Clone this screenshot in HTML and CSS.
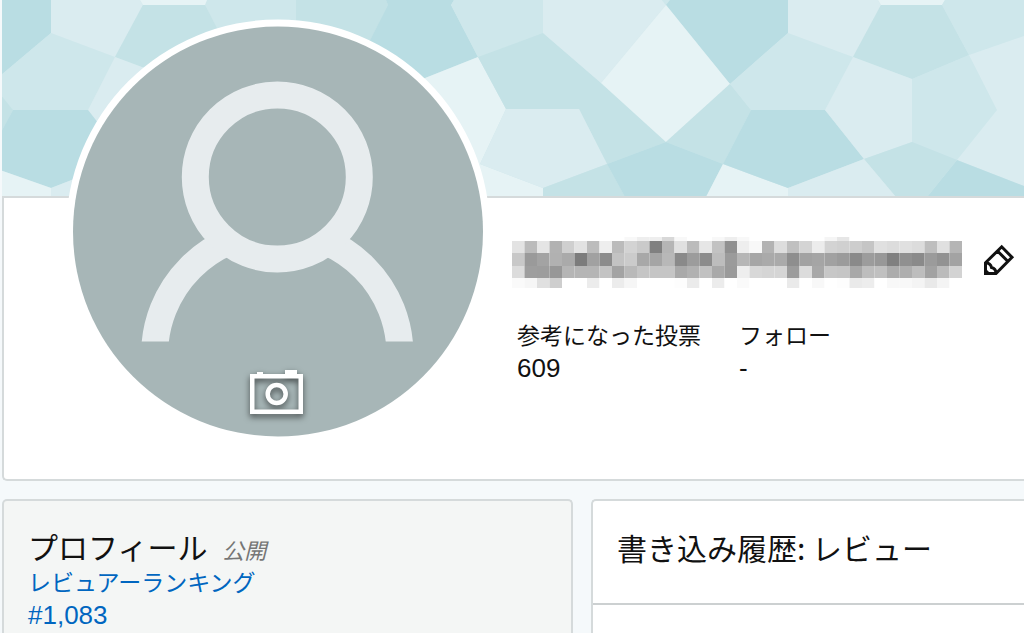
FILE: index.html
```html
<!DOCTYPE html>
<html lang="ja">
<head>
<meta charset="utf-8">
<title>プロフィール</title>
<link rel="stylesheet" href="styles.css">
</head>
<body>
<div class="page">
  <div class="banner">
    <svg class="banner-art" viewBox="2 0 1022 197" preserveAspectRatio="xMinYMin slice" aria-hidden="true">
      <rect class="t3" x="2" width="1022" height="197"/>
      <g class="tiles">
        <path class="t1" d="M0 0H51V33L0 76z"/>
        <path class="t3" d="M0 76L51 33L115 57L88 110H13L0 94z"/>
        <path class="t2" d="M0 94L13 110L0 134z"/>
        <path class="t4" d="M51 0H140L143 5L115 57L51 33z"/>
        <path class="t5" d="M140 0H207L205 5H143z"/>
        <path class="t2" d="M143 5H205L231 55L174 79L115 57z"/>
        <path class="t4" d="M115 57L174 79V142L126 159L88 110z"/>
        <path class="t1" d="M13 110H88L126 159L51 188L0 170V134z"/>
        <path class="t5" d="M0 170L51 188V197H0z"/>
        <path class="t4" d="M51 188L126 159L158 197H51z"/>
        <path class="t2" d="M296 0H386L388 5L360 62L296 60z"/>
        <path class="t1" d="M386 0H454L451 5L478 57L425 78L340 100L388 5z"/>
        <path class="t3" d="M454 0H543V33L478 57L451 5z"/>
        <path class="t5" d="M478 57L506 109L480 164L543 188V197H440L400 88z"/>
        <path class="t2" d="M543 33L478 57L506 109H579L607 164L666 142L601 83z"/>
        <path class="t4" d="M543 0V33L601 83L666 5L662 0z"/>
        <path class="t4" d="M506 109L480 164L543 188L607 164L579 109z"/>
        <path class="t2" d="M543 188L607 164L625 197H543z"/>
        <path class="t3" d="M662 0H670L666 5z"/>
        <path class="t1" d="M670 0L666 5L730 84L788 33V0z"/>
        <path class="t5" d="M666 5L601 83L666 142L730 84z"/>
        <path class="t2" d="M730 84L666 142L723 164L751 110z"/>
        <path class="t1" d="M666 142L607 164L625 197H706L723 164z"/>
        <path class="t5" d="M723 164L706 197H788V188z"/>
        <path class="t1" d="M751 110L723 164L788 188L864 159L825 110z"/>
        <path class="t3" d="M788 33L730 84L751 110H825L853 57z"/>
        <path class="t4" d="M788 0V33L853 57L881 5L878 0z"/>
        <path class="t5" d="M878 0L881 5H942L945 0z"/>
        <path class="t2" d="M881 5L853 57L912 79L969 55L942 5z"/>
        <path class="t3" d="M945 0L942 5L969 55L1024 36V0z"/>
        <path class="t4" d="M853 57L825 110L864 159L912 142V79z"/>
        <path class="t3" d="M912 79V142L957 160L997 110L969 55z"/>
        <path class="t4" d="M969 55L997 110L957 160L1024 186V36z"/>
        <path class="t1" d="M957 160L1024 186V197H927z"/>
        <path class="t2" d="M912 142L864 159L896 197H927L957 160z"/>
        <path class="t4" d="M864 159L788 188V197H896z"/>
      </g>
    </svg>
  </div>

  <header class="hero">
    <div class="avatar">
      <svg class="avatar-art" viewBox="66 19 424 424" role="img" aria-label="プロフィール画像">
        <clipPath id="bust"><rect x="66" y="19" width="424" height="322.500"/></clipPath>
        <circle class="ring" cx="278" cy="231.500" r="212"/>
        <circle class="disc" cx="278" cy="231.500" r="205"/>
        <g class="person" clip-path="url(#bust)">
          <path d="M154.600 354.400A122.700 122.700 0 0 1 400 354.400"/>
          <circle class="disc" cx="277.300" cy="177" r="82"/>
        </g>
      </svg>
      <button class="camera" type="button" aria-label="画像を変更">
        <svg viewBox="0 0 56 48" aria-hidden="true">
          <path d="M1 5H8V3H14V5H36V1H48V5H54V45H1zM5.500 9.500V40.500H49.500V9.500z" fill-rule="evenodd"/>
          <circle cx="27.700" cy="25" r="9"/>
        </svg>
      </button>
    </div>
    <div class="info">
      <div class="name-row">
        <svg class="name-mask" id="name" viewBox="0 0 450 52" role="img" aria-label="名前"></svg>
        <button class="edit" type="button" aria-label="編集">
          <svg viewBox="982 246 34 34" aria-hidden="true">
            <path d="M985.500 273.500V262.800L1001.700 246.800L1012 257.300L996 273.500zM997.500 251L1008 261.500M985.500 262.800C989 263 991 265 991.500 267.500C994 268 996 270 996 273.500"/>
            <path class="lead" d="M985 268L991 274H985z"/>
          </svg>
        </button>
      </div>
      <dl class="stats">
        <div><dt>参考になった投票</dt><dd>609</dd></div>
        <div><dt>フォロー</dt><dd>-</dd></div>
      </dl>
    </div>
  </header>

  <main class="columns">
    <section class="card profile">
      <h2>プロフィール <em>公開</em></h2>
      <a href="#ranking">レビュアーランキング<span class="rank">#1,083</span></a>
    </section>
    <section class="card history">
      <h2>書き込み履歴: レビュー</h2>
    </section>
  </main>
</div>
<script src="script.js"></script>
</body>
</html>
```
FILE: styles.css
```css
* {
  box-sizing: border-box;
}

body {
  margin: 0;
  background: #f5f9fb;
  color: #111;
  font-family: "Noto Sans CJK JP", sans-serif;
  font-size: 23px;
  line-height: 34px;
}

.page {
  display: flex;
  flex-direction: column;
  min-height: 100vh;
  padding-left: 2px;
}

.banner {
  height: 196px;
  overflow: hidden;
}

.banner-art {
  display: block;
  width: 100%;
  min-height: 197px;
}

.t1 { fill: #b9dde3; }
.t2 { fill: #c4e2e6; }
.t3 { fill: #cee7eb; }
.t4 { fill: #daecf0; }
.t5 { fill: #e6f3f5; }

.hero {
  display: flex;
  gap: 22px;
  padding: 0 8px 36px 62px;
  background: #fff;
  border: 2px solid #d5dadb;
  border-right: 0;
  border-radius: 0 0 0 5px;
}

.avatar {
  position: relative;
  flex: none;
  width: 424px;
  height: 424px;
  margin-top: -179px;
}

.avatar-art {
  display: block;
}

.ring { fill: #fff; }
.disc { fill: #a7b6b7; }

.person {
  stroke: #e7ecee;
  stroke-width: 27;
}

.person path {
  fill: none;
}

button {
  padding: 0;
  border: 0;
  background: none;
  cursor: pointer;
}

button svg {
  display: block;
}

.camera {
  position: absolute;
  bottom: 26px;
  left: 183px;
  width: 56px;
  height: 48px;
}

.camera svg {
  fill: #fff;
  overflow: visible;
  filter: drop-shadow(0 3px 3px rgba(0, 0, 0, 0.6));
}

.camera circle {
  fill: none;
  stroke: #fff;
  stroke-width: 4.5;
}

.info {
  flex: 1;
  padding-top: 39px;
}

.name-row {
  display: flex;
  align-items: center;
  justify-content: space-between;
}

.name-mask {
  width: 450px;
  height: 52px;
}

.edit {
  width: 34px;
  height: 34px;
}

.edit svg {
  overflow: visible;
}

.edit path {
  fill: none;
  stroke: #111;
  stroke-width: 3;
}

.edit .lead {
  fill: #111;
  stroke: none;
}

.stats {
  display: flex;
  gap: 38px;
  margin: 28px 0 0;
  padding-left: 5px;
}

.stats dd {
  margin: 0;
}

.stats dd,
.rank {
  font-family: "Liberation Sans", "Noto Sans CJK JP", sans-serif;
  font-size: 26px;
}

.columns {
  display: grid;
  flex: 1;
  grid-template-columns: 571fr 433fr;
  gap: 18px;
  margin-top: 18px;
}

.card {
  border: 2px solid #d5dadb;
  border-bottom: 0;
  border-radius: 5px 5px 0 0;
  background: #fff;
}

.profile {
  padding: 30px 24px 0;
  background: #f4f6f5;
}

h2 {
  margin: 0;
  font-size: 30px;
  font-weight: 400;
  line-height: 30px;
}

h2 em {
  margin-left: 8px;
  color: #767676;
  font-size: 22px;
}

a {
  display: block;
  color: #0066c0;
  text-decoration: none;
}

.rank {
  display: block;
}

.history {
  border-right: 0;
  border-radius: 5px 0 0 0;
}

.history h2 {
  padding: 31px 24px 41px;
  border-bottom: 2px solid #ccd0d1;
}
```
FILE: script.js
```js
// Mosaic that hides the member's name: one grey level (hex) per cell.
const rows = [
  { y: 0, h: 4, v: "ff ff ff ff ff ff ff ff ff f8 ee ee d8 f8 ff ff f8 ee f8 ff ff ff ff ff ff f5 e6 ff ff ff ff ff ff ff ff ff" },
  { y: 4, h: 12, v: "e3 bb e5 b2 cf e2 bc ee bb d3 ca 80 b5 e0 bb e6 c2 90 ee f8 b3 dd c0 d4 ec d3 d0 cd c5 e0 dc e0 dc be e0 b5" },
  { y: 16, h: 13, v: "c8 9a a3 b1 aa 7c a1 8c c3 cb a8 a5 b8 8a 9c 8c bd 9b b6 a6 aa aa 8e a2 a5 a1 9b 8a 9c 98 80 90 8a 9b 92 a3" },
  { y: 29, h: 12, v: "dc 9e 9d 97 b5 b5 b5 c3 a3 b9 c5 c5 c5 a9 b1 c1 a9 9a ee d8 d5 d5 9c dc a8 c7 c5 a8 bd c0 ac ae bd a2 bb d3" },
  { y: 41, h: 10, v: "fa f6 e0 ce ff ff ec ff ec f6 ff ff ff fd eb ff ec ff fa ff ff ff ea ff f8 ff fd ea ed ff f8 f8 f4 e9 f4 ff" }
];
const svg = document.getElementById("name");
for (const row of rows) {
  row.v.split(" ").forEach((level, i) => {
    const cell = document.createElementNS("http://www.w3.org/2000/svg", "rect");
    cell.setAttribute("x", i * 12.5);
    cell.setAttribute("y", row.y);
    cell.setAttribute("width", 12.5);
    cell.setAttribute("height", row.h);
    cell.setAttribute("fill", "#" + level.repeat(3));
    svg.append(cell);
  });
}
```
